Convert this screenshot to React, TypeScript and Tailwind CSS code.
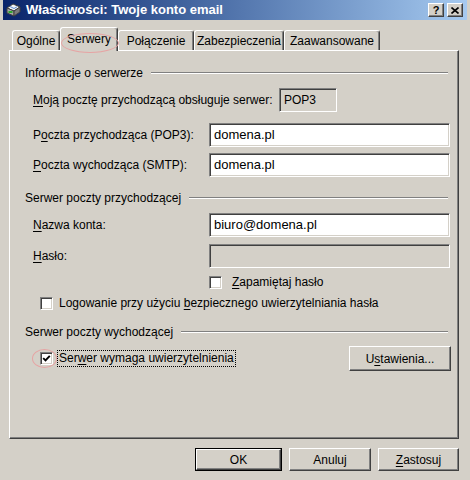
const sunken =
  "border border-t-[#808080] border-l-[#808080] border-r-white border-b-white shadow-[inset_1px_1px_0_#404040,inset_-1px_-1px_0_#d4d0c8]";
const raised =
  "border border-t-white border-l-white border-r-[#404040] border-b-[#404040] shadow-[inset_-1px_-1px_0_#808080] bg-[#d4d0c8]";

function U({ children }: { children: string }) {
  return <span className="underline decoration-1 underline-offset-[2px]">{children}</span>;
}

function GroupLabel({ text, className }: { text: string; className: string }) {
  return (
    <div className={`flex h-[14px] items-center pl-[15px] pr-[10px] ${className}`}>
      <span>{text}</span>
      <div className="ml-[8px] h-[2px] flex-1 border-t border-b border-t-[#808080] border-b-white" />
    </div>
  );
}

function Checkbox({ checked }: { checked?: boolean }) {
  return (
    <div className={`flex h-[13px] w-[13px] shrink-0 items-center justify-center bg-white ${sunken}`}>
      {checked ? (
        <svg width="9" height="9" viewBox="0 0 9 9">
          <path d="M1.2 4.2 L3.5 6.5 L7.8 1.8" fill="none" stroke="#000" strokeWidth="1.9" />
        </svg>
      ) : null}
    </div>
  );
}

function Tab({ label, width, active }: { label: React.ReactNode; width: number; active?: boolean }) {
  if (active) {
    return (
      <div
        className="relative z-10 mb-[-1px] flex h-[24px] items-center justify-center rounded-t-[3px] border-t border-l border-r border-t-white border-l-white border-r-[#404040] bg-[#d4d0c8] pb-[2px] shadow-[inset_-1px_0_0_#808080]"
        style={{ width }}
      >
        {label}
        <div className="absolute left-0 top-[5px] h-[20px] w-[58px] rounded-[50%] border border-[#e6a4a4]" />
      </div>
    );
  }
  return (
    <div
      className="flex h-[20px] items-center justify-center rounded-t-[3px] border-t border-l border-r border-t-white border-l-white border-r-[#404040] shadow-[inset_-1px_0_0_#808080]"
      style={{ width }}
    >
      {label}
    </div>
  );
}

function TitleIcon() {
  return (
    <svg width="17" height="16" viewBox="0 0 17 16">
      <path d="M2 6 L8 2 L15 5 L9 9 Z" fill="#f4f4f4" stroke="#404040" strokeWidth="1" />
      <path d="M2 6 L9 9 L9 14 L2 11 Z" fill="#a8a8a8" stroke="#404040" strokeWidth="1" />
      <path d="M9 9 L15 5 L15 10 L9 14 Z" fill="#7c7c7c" stroke="#404040" strokeWidth="1" />
      <rect x="3.5" y="9" width="4" height="2" fill="#2fa82f" />
      <path d="M5 4.5 L9 6.5 L12 4.8" fill="none" stroke="#5a8ad0" strokeWidth="1" />
    </svg>
  );
}

function InputRow({ label, value, disabled, className }: { label: React.ReactNode; value?: string; disabled?: boolean; className: string }) {
  return (
    <div className={`flex h-[24px] items-center ${className}`}>
      <div className="w-[199px] pl-[23px]">{label}</div>
      <div
        className={`flex h-[24px] w-[241px] items-center pl-[4px] text-[13px] ${disabled ? "bg-[#d4d0c8]" : "bg-white"} ${sunken}`}
      >
        {value}
      </div>
    </div>
  );
}

export default function App() {
  return (
    <div className="flex h-[480px] w-[470px] flex-col bg-[#d4d0c8] font-['Liberation_Sans',Arial,sans-serif] text-[12px] text-black">
      <div className="mx-[3px] flex h-[20px] items-center bg-gradient-to-r from-[#0a246a] to-[#a6caf0] pl-[2px] pr-[4px]">
        <TitleIcon />
        <span className="ml-[4px] text-[13px] font-bold text-white">Właściwości: Twoje konto email</span>
        <div className="ml-auto flex items-center gap-[3px]">
          <div className={`flex h-[14px] w-[16px] items-center justify-center text-[11px] font-bold leading-none ${raised}`}>?</div>
          <div className={`flex h-[14px] w-[16px] items-center justify-center ${raised}`}>
            <svg width="8" height="7" viewBox="0 0 8 7">
              <path d="M0.5 0.5 L7.5 6.5 M7.5 0.5 L0.5 6.5" stroke="#000" strokeWidth="1.6" />
            </svg>
          </div>
        </div>
      </div>

      <div className="mt-[7px] flex h-[23px] items-end pl-[12px]">
        <Tab label="Ogólne" width={48} />
        <Tab label="Serwery" width={58} active />
        <Tab label="Połączenie" width={76} />
        <Tab label="Zabezpieczenia" width={90} />
        <Tab label="Zaawansowane" width={96} />
      </div>

      <div className="ml-[9px] flex h-[389px] w-[450px] flex-col border border-t-white border-l-white border-r-[#404040] border-b-[#404040] shadow-[inset_-1px_-1px_0_#808080]">
        <GroupLabel text="Informacje o serwerze" className="mt-[15px]" />
        <div className="mt-[8px] flex h-[24px] items-center">
          <div className="w-[269px] pl-[23px]">
            <U>M</U>oją pocztę przychodzącą obsługuje serwer:
          </div>
          <div className={`flex h-[24px] w-[58px] items-start bg-[#d4d0c8] pl-[4px] pt-[5px] leading-[12px] ${sunken}`}>POP3</div>
        </div>
        <InputRow
          className="mt-[11px]"
          label={<>P<U>o</U>czta przychodząca (POP3):</>}
          value="domena.pl"
        />
        <InputRow
          className="mt-[6px]"
          label={<><U>P</U>oczta wychodząca (SMTP):</>}
          value="domena.pl"
        />

        <GroupLabel text="Serwer poczty przychodzącej" className="mt-[14px]" />
        <InputRow className="mt-[8px]" label={<><U>N</U>azwa konta:</>} value="biuro@domena.pl" />
        <InputRow className="mt-[7px]" label={<><U>H</U>asło:</>} disabled />
        <div className="mt-[8px] flex h-[13px] items-center gap-[10px] pl-[199px] leading-[13px]">
          <Checkbox />
          <span>
            <U>Z</U>apamiętaj hasło
          </span>
        </div>
        <div className="mt-[8px] flex h-[13px] items-center gap-[6px] pl-[30px] leading-[13px]">
          <Checkbox />
          <span>
            Logowanie przy użyciu <U>b</U>ezpiecznego uwierzytelniania hasła
          </span>
        </div>

        <GroupLabel text="Serwer poczty wychodzącej" className="mt-[15px]" />
        <div className="mt-[7px] flex h-[25px] items-center pl-[30px] pr-[7px]">
          <div className="relative">
            <Checkbox checked />
            <div className="absolute left-[-8px] top-[-3px] h-[19px] w-[25px] rounded-[50%] border border-[#e6a4a4]" />
          </div>
          <div className="ml-[4px] flex h-[17px] items-center border border-dotted border-black px-[1px] leading-[13px]">
            <span className="whitespace-nowrap">
              Ser<U>w</U>er wymaga uwierzytelnienia
            </span>
          </div>
          <button type="button" className={`ml-auto flex h-[25px] w-[102px] items-center justify-center ${raised}`}>
            <span>
              U<U>s</U>tawienia...
            </span>
          </button>
        </div>
      </div>

      <div className="mt-[9px] flex justify-end gap-[7px] pr-[11px]">
        <div className="h-[23px] w-[87px] border border-black">
          <button type="button" className={`flex h-full w-full items-center justify-center ${raised}`}>
            OK
          </button>
        </div>
        <button type="button" className={`flex h-[23px] w-[82px] items-center justify-center ${raised}`}>
          Anuluj
        </button>
        <button type="button" className={`flex h-[23px] w-[81px] items-center justify-center ${raised}`}>
          <span>
            <U>Z</U>astosuj
          </span>
        </button>
      </div>
    </div>
  );
}
